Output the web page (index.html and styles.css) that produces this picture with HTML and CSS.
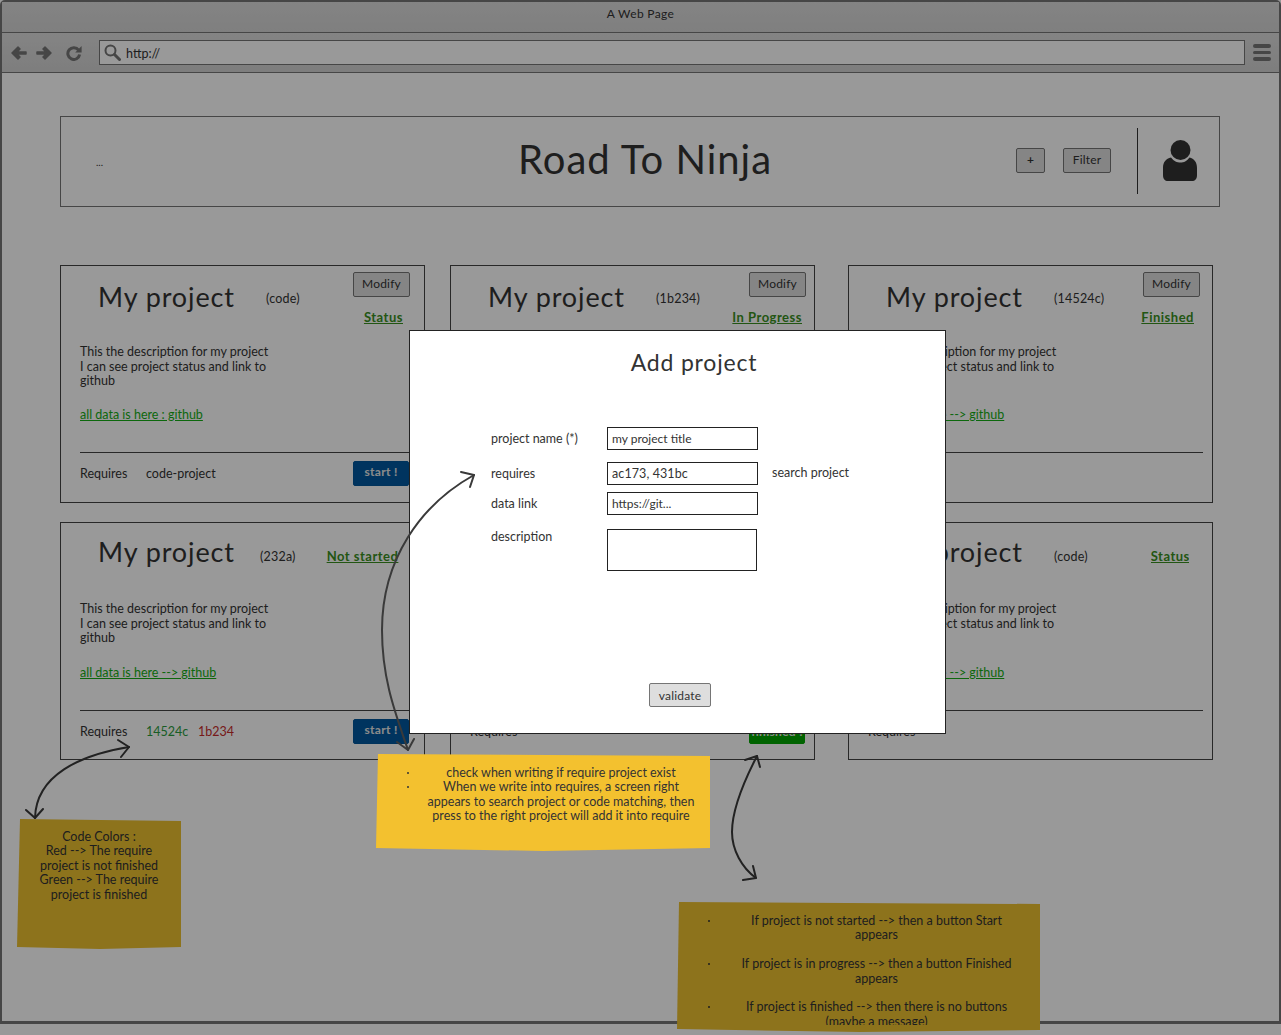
FILE: index.html
```html
<!DOCTYPE html>
<html lang="en">
<head>
  <meta charset="UTF-8" />
  <meta name="viewport" content="width=device-width, initial-scale=1.0" />
  <title>Road To Ninja</title>
  <link rel="stylesheet" href="styles.css">
</head>
<body>
  <div class="window">
    <div class="titlebar">A Web Page</div>
    <div class="toolbar">
      <svg class="nav-icon" width="16" height="14" viewBox="0 0 16 14"><path d="M1 7 7 1 9 3 6 6H15V8H6L9 11 7 13Z"/></svg>
      <svg class="nav-icon nav-forward" width="16" height="14" viewBox="0 0 16 14"><path d="M15 7 9 1 7 3 10 6H1V8H10L7 11 9 13Z"/></svg>
      <svg class="nav-icon nav-reload" width="16" height="16" viewBox="0 0 16 16"><path class="ring" d="M12.6 5.2A5.9 5.9 0 1 0 13.6 9.5"/><path d="M15.6 1V7.4H9.2Z"/></svg>
      <div class="address">
        <svg width="17" height="17" viewBox="0 0 17 17"><circle class="lens" cx="6.5" cy="6.5" r="5"/><path class="handle" d="M10.5 10.5 15.5 15.5"/></svg>
        <span>http://</span>
      </div>
      <div class="burger"><i></i><i></i><i></i></div>
    </div>

    <div class="content">
      <header class="top">
        <span class="top-dots">...</span>
        <h1>Road To Ninja</h1>
        <button class="btn btn-plus">+</button>
        <button class="btn btn-filter">Filter</button>
        <div class="top-user">
          <svg width="34" height="41" viewBox="0 0 34 41"><circle cx="17.5" cy="10" r="10"/><path d="M0 35V28C0 22 3 19 8 17.6 11 21.6 14 22.6 17.5 22.6 21 22.6 23.5 21.6 26.5 17.6 31 19 34 22 34 28V35C34 39 32 41 29 41H5C2 41 0 39 0 35Z"/></svg>
        </div>
      </header>

      <div class="cards">
        <section class="card card-a">
          <div class="card-head">
            <h2>My project</h2>
            <span class="code">(code)</span>
            <div class="card-side">
              <button class="btn btn-modify">Modify</button>
              <a class="status status-a">Status</a>
            </div>
          </div>
          <p class="desc">This the description for my project<br>I can see project status and link to<br>github</p>
          <a class="data-link">all data is here : github</a>
          <div class="card-foot">
            <span class="req">Requires</span>
            <span>code-project</span>
            <button class="action">start !</button>
          </div>
        </section>

        <section class="card card-b">
          <div class="card-head">
            <h2>My project</h2>
            <span class="code">(1b234)</span>
            <div class="card-side">
              <button class="btn btn-modify">Modify</button>
              <a class="status status-b">In Progress</a>
            </div>
          </div>
          <p class="desc">This the description for my project<br>I can see project status and link to<br>github</p>
          <a class="data-link">all data is here --&gt; github</a>
          <div class="card-foot">
            <span class="req">Requires</span>
          </div>
        </section>

        <section class="card card-c">
          <div class="card-head">
            <h2>My project</h2>
            <span class="code">(14524c)</span>
            <div class="card-side">
              <button class="btn btn-modify">Modify</button>
              <a class="status status-c">Finished</a>
            </div>
          </div>
          <p class="desc">This the description for my project<br>I can see project status and link to<br>github</p>
          <a class="data-link">all data is here --&gt; github</a>
          <div class="card-foot">
            <span class="req">Requires</span>
          </div>
        </section>

        <section class="card card-a card-low">
          <div class="card-head">
            <h2>My project</h2>
            <span class="code code-tight">(232a)</span>
            <a class="status status-inline status-d">Not started</a>
          </div>
          <p class="desc">This the description for my project<br>I can see project status and link to<br>github</p>
          <a class="data-link">all data is here --&gt; github</a>
          <div class="card-foot">
            <span class="req">Requires</span>
            <span class="tag-ok">14524c</span>
            <span class="tag-bad">1b234</span>
            <button class="action">start !</button>
          </div>
        </section>

        <section class="card card-b card-low">
          <div class="card-head">
            <h2>My project</h2>
            <span class="code">(code)</span>
            <a class="status status-inline">Status</a>
          </div>
          <p class="desc">This the description for my project<br>I can see project status and link to<br>github</p>
          <a class="data-link">all data is here --&gt; github</a>
          <div class="card-foot">
            <span class="req">Requires</span>
            <button class="action action-done">finished !</button>
          </div>
        </section>

        <section class="card card-c card-low">
          <div class="card-head">
            <h2>My project</h2>
            <span class="code">(code)</span>
            <a class="status status-inline status-f">Status</a>
          </div>
          <p class="desc">This the description for my project<br>I can see project status and link to<br>github</p>
          <a class="data-link">all data is here --&gt; github</a>
          <div class="card-foot">
            <span class="req">Requires</span>
          </div>
        </section>
      </div>
    </div>
  </div>

  <div class="sticky sticky-left">
    Code Colors :<br>Red --&gt; The require<br>project is not finished<br>Green --&gt; The require<br>project is finished
  </div>
  <div class="sticky sticky-bottom">
    <ul>
      <li>If project is not started --&gt; then a button Start<br>appears</li>
      <li>If project is in progress --&gt; then a button Finished<br>appears</li>
      <li>If project is finished --&gt; then there is no buttons<br>(maybe a message)</li>
    </ul>
  </div>

  <div class="dim"></div>

  <div class="modal">
    <h3>Add project</h3>
    <div class="form-row row-name">
      <label>project name (*)</label>
      <div class="field">my project title</div>
    </div>
    <div class="form-row row-req">
      <label>requires</label>
      <div class="field field-big">ac173, 431bc</div>
      <span class="search">search project</span>
    </div>
    <div class="form-row row-link">
      <label>data link</label>
      <div class="field">https://git...</div>
    </div>
    <div class="form-row row-desc">
      <label>description</label>
      <div class="field field-area"></div>
    </div>
    <button class="btn validate">validate</button>
  </div>

  <div class="sticky sticky-top">
    <ul>
      <li>check when writing if require project exist</li>
      <li>When we write into requires, a screen right<br>appears to search project or code matching, then<br>press to the right project will add it into require</li>
    </ul>
  </div>

  <!-- annotation arrows -->
  <svg class="arrows" width="1281" height="1035" viewBox="0 0 1281 1035">
    <path class="arrow-light" d="M474 475C420 505 382 560 382 630 382 680 396 715 408 750"/>
    <path class="arrow-light" d="M461 472 474 475 470 487M397 742 408 750 414 739"/>
    <path d="M129 747C80 755 36 775 35 818"/>
    <path d="M118 740 129 747 121 757M26 810 35 818 43 809"/>
    <path d="M757 756C742 785 732 810 732 832 732 850 742 868 756 878"/>
    <path d="M745 760 757 756 760 767M743 880 756 878 753 866"/>
  </svg>
</body>
</html>
```

FILE: styles.css
```css
* { box-sizing: border-box; }
html, body { margin: 0; padding: 0; }
body { width: 1281px; height: 1035px; overflow: hidden; position: relative; background: #fff; color: #333; font-family: "Lato", "Liberation Sans", sans-serif; font-size: 12.5px; }
h1, h2, h3, p { margin: 0; font-weight: 400; }
button { font: inherit; letter-spacing: inherit; color: inherit; padding: 0; }

/* browser window */
.window { height: 1024px; border: 2px solid #757575; border-bottom-width: 3px; border-radius: 5px 5px 0 0; }
.titlebar { height: 31px; border-bottom: 1px solid #757575; background: linear-gradient(#dcdcdc, #d4d4d4); text-align: center; font-size: 12px; line-height: 24px; letter-spacing: 0.35px; }
.toolbar { height: 40px; display: flex; align-items: center; padding: 0 8px 0 9px; border-bottom: 1px solid #757575; background: linear-gradient(#dcdcdc, #d2d2d2); }
.nav-icon { fill: #757575; stroke: #757575; stroke-width: 1.5; stroke-linejoin: round; }
.nav-forward { margin-left: 9px; }
.nav-reload { margin-left: 14px; stroke: none; }
.nav-reload .ring { fill: none; stroke: #757575; stroke-width: 3; }
.address { flex: 1; height: 25px; margin-left: 17px; display: flex; align-items: center; gap: 5px; padding-left: 4px; background: #fff; border: 1.5px solid #757575; }
.address span { padding-top: 2px; }
.lens { fill: none; stroke: #757575; stroke-width: 2; }
.handle { fill: none; stroke: #757575; stroke-width: 3; stroke-linecap: round; }
.burger { width: 18px; margin-left: 8px; display: flex; flex-direction: column; gap: 3px; }
.burger i { height: 3.5px; border-radius: 2px; background: #757575; }

.content { padding: 43px 59px 0 58px; }

/* header */
.top { height: 91px; display: flex; align-items: center; position: relative; border: 1px solid #757575; padding: 0 0 2px 35px; }
.top-dots { font-size: 10px; margin-top: 2px; }
.top h1 { position: absolute; left: 0; right: 0; top: 18px; padding-left: 10px; text-align: center; font-size: 40px; line-height: 48px; letter-spacing: 1px; }
.btn { height: 25px; padding-bottom: 2px; border: 1px solid #757575; border-radius: 2px; background: #dedede; font-size: 12px; letter-spacing: 0.2px; }
.btn-plus { width: 29px; margin-left: auto; font-weight: 700; }
.btn-filter { width: 48px; margin-left: 18px; }
.top-user { height: 66px; margin-left: 26px; padding: 12px 22px 0 25px; border-left: 1px solid #333; }
.top-user svg { fill: #333; display: block; }

/* project cards */
.cards { margin-top: 58px; display: grid; grid-template-columns: 390px 398px 365px; grid-auto-rows: 238px; row-gap: 19px; }
.card { border: 1px solid #444; width: 365px; }
.card-head { height: 78px; display: flex; align-items: flex-start; padding-left: 37px; }
.card-head h2 { font-size: 27px; line-height: 36px; margin-top: 13px; width: 136px; white-space: nowrap; letter-spacing: 0.9px; }
.card-low h2 { margin-top: 11px; }
.code { margin: 26px 0 0 32px; line-height: 14px; letter-spacing: 0.2px; }
.card-low .code { margin-top: 27px; }
.card-low .code-tight { margin-left: 26px; }
.card-side { margin-left: auto; display: flex; flex-direction: column; align-items: flex-end; padding-top: 6px; }
.btn-modify { width: 57px; }
.card-a .card-side { padding-right: 14px; }
.card-b .card-side { padding-right: 8px; }
.card-c .card-side { padding-right: 12px; }
.status { display: inline-block; margin-top: 13px; color: #3a8f1e; font-size: 13px; font-weight: 700; line-height: 15px; letter-spacing: 0.5px; text-decoration: underline; }
.status-a { margin-right: 7px; }
.status-b { margin-right: 4px; }
.status-c { margin-right: 6px; }
.status-inline { margin: 26px 0 0 28px; }
.status-d { margin-left: 31px; }
.status-f { width: 38px; overflow: hidden; margin-left: 63px; }
.desc { margin-left: 19px; padding-top: 1px; line-height: 14.5px; }
.data-link { display: block; margin: 19px 0 0 19px; line-height: 14px; color: #15ad15; text-decoration: underline; }
.card-low .data-link { margin-top: 20px; }
.card-foot { margin: 30px 9px 0 19px; height: 50px; padding-top: 8px; border-top: 1px solid #444; display: flex; align-items: flex-start; line-height: 25px; }
.req { width: 66px; }
.tag-ok { color: #2a9c3e; width: 52px; }
.tag-bad { color: #c62b2b; }
.action { height: 25px; width: 56px; margin-left: auto; margin-right: 6px; padding-bottom: 3px; border: 1px solid #00569a; border-radius: 2px; background: #00589e; color: #e8e8e8; font-weight: 700; font-size: 12px; line-height: 1; letter-spacing: 0.3px; }
.card-b .action { margin-right: 0; }
.action-done { padding: 2px 0 0; background: #00a600; border-color: #00a600; }

/* sticky notes */
.sticky { position: absolute; text-align: center; line-height: 14.4px; color: #333; }
.sticky ul { margin: 0; padding: 0 0 0 36px; overflow: hidden; list-style: none; }
.sticky li { position: relative; }
.sticky li::before { content: ""; position: absolute; left: -5px; top: 6px; width: 2px; height: 2px; border-radius: 50%; background: #333; }
.sticky-left { left: 17px; top: 819px; width: 164px; height: 130px; padding-top: 11px; background: #ecc02f; clip-path: polygon(3px 0, 100% 2px, 100% 128px, 83px 100%, 0 128px); }
.sticky-bottom { left: 677px; top: 902px; width: 363px; height: 130px; padding-top: 12px; background: #ecc02f; clip-path: polygon(2px 0, 100% 2px, 100% 128px, 183px 100%, 0 127px); }
.sticky-bottom ul { height: 111px; }
.sticky-bottom li { margin-bottom: 14.4px; }
.sticky-top { left: 376px; top: 754px; width: 334px; height: 97px; padding-top: 12px; background: #f3c12f; clip-path: polygon(2px 0, 100% 2px, 100% 94px, 167px 100%, 0 94px); }

.dim { position: absolute; inset: 0; background: rgba(0, 0, 0, 0.4); }

/* add project dialog */
.modal { position: absolute; left: 409px; top: 330px; width: 537px; height: 404px; display: flex; flex-direction: column; padding: 0 0 26px 81px; background: #fff; border: 1px solid #222; }
.modal h3 { margin: 16px 0 0 -81px; text-align: center; padding-left: 33px; font-size: 23px; line-height: 30px; letter-spacing: 0.8px; }
.form-row { display: flex; align-items: flex-start; }
.form-row label { width: 116px; line-height: 16px; }
.field { width: 151px; height: 23px; border: 1px solid #222; padding-left: 4px; font-size: 12px; line-height: 22px; }
.field-big { font-size: 12.5px; letter-spacing: 0.1px; }
.field-area { width: 150px; height: 42px; }
.row-name { margin-top: 50px; }
.row-name label { margin-top: 4px; }
.row-req { margin-top: 12px; }
.row-req label { margin-top: 4px; }
.row-link { margin-top: 7px; }
.row-link label { margin-top: 4px; }
.row-desc { margin-top: 14px; }
.row-desc label { margin-top: 0; }
.search { margin: 3px 0 0 14px; line-height: 16px; }
.validate { width: 62px; margin: auto 0 0 158px; flex: none; height: 24px; padding-bottom: 0; }

.arrows { position: absolute; left: 0; top: 0; fill: none; stroke: #222; stroke-width: 2; stroke-linecap: round; stroke-linejoin: round; }
.arrows .arrow-light { stroke: #3a3a3a; }
```
